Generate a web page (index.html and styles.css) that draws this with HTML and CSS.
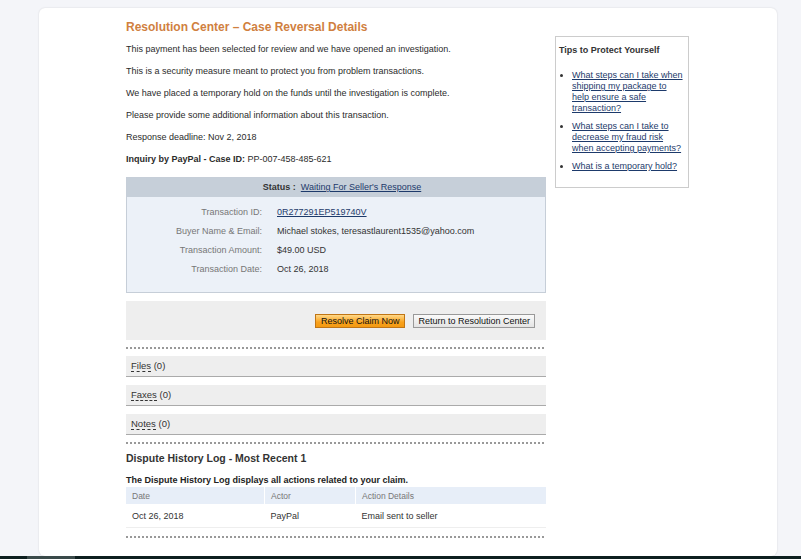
FILE: index.html
```html
<!DOCTYPE html>
<html>
<head>
<meta charset="utf-8">
<link rel="stylesheet" href="styles.css">
</head>
<body>
<div class="page">
  <div class="card">
    <div class="layout">
      <div class="main">
        <h1 class="title">Resolution Center – Case Reversal Details</h1>
        <p class="para">This payment has been selected for review and we have opened an investigation.</p>
        <p class="para">This is a security measure meant to protect you from problem transactions.</p>
        <p class="para">We have placed a temporary hold on the funds until the investigation is complete.</p>
        <p class="para">Please provide some additional information about this transaction.</p>
        <p class="para">Response deadline: Nov 2, 2018</p>
        <p class="para"><b>Inquiry by PayPal - Case ID:</b> PP-007-458-485-621</p>

        <div class="status">
          <div class="status-head"><b>Status :</b>&nbsp; <a href="#" class="link">Waiting For Seller's Response</a></div>
          <div class="status-body">
            <div class="row"><span class="lbl">Transaction ID:</span><span class="val"><a href="#" class="link">0R277291EP519740V</a></span></div>
            <div class="row"><span class="lbl">Buyer Name &amp; Email:</span><span class="val">Michael stokes, teresastlaurent1535@yahoo.com</span></div>
            <div class="row"><span class="lbl">Transaction Amount:</span><span class="val">$49.00 USD</span></div>
            <div class="row"><span class="lbl">Transaction Date:</span><span class="val">Oct 26, 2018</span></div>
          </div>
        </div>

        <div class="actions">
          <button class="btn btn-primary">Resolve Claim Now</button>
          <button class="btn btn-return">Return to Resolution Center</button>
        </div>

        <div class="dots"></div>

        <div class="sect"><span class="sect-name">Files</span> (0)</div>
        <div class="sect"><span class="sect-name">Faxes</span> (0)</div>
        <div class="sect"><span class="sect-name">Notes</span> (0)</div>

        <div class="dots dots-2"></div>

        <h2 class="log-title">Dispute History Log - Most Recent 1</h2>
        <p class="log-desc">The Dispute History Log displays all actions related to your claim.</p>
        <table class="log">
          <thead>
            <tr><th class="c1">Date</th><th class="c2">Actor</th><th class="c3">Action Details</th></tr>
          </thead>
          <tbody>
            <tr><td>Oct 26, 2018</td><td>PayPal</td><td>Email sent to seller</td></tr>
          </tbody>
        </table>
        <div class="dots dots-3"></div>
      </div>

      <aside class="tips">
        <h3 class="tips-title">Tips to Protect Yourself</h3>
        <ul class="tips-list">
          <li><a href="#" class="link">What steps can I take when shipping my package to help ensure a safe transaction?</a></li>
          <li><a href="#" class="link">What steps can I take to decrease my fraud risk when accepting payments?</a></li>
          <li><a href="#" class="link">What is a temporary hold?</a></li>
        </ul>
      </aside>
    </div>
  </div>
</div>
<div class="taskbar"><div class="thumb"></div></div>
</body>
</html>
```

FILE: styles.css
```css
html, body {
  margin: 0;
  padding: 0;
}
body {
  background: #f4f5f9;
  font-family: "Liberation Sans", Arial, sans-serif;
  color: #333;
  height: 559px;
  overflow: hidden;
  position: relative;
}
.page {
  padding: 8px 24px 0 39px;
}
.card {
  width: 738px;
  height: 548px;
  background: #fff;
  border-radius: 6px;
  box-shadow: 0 0 2px rgba(0,0,0,0.14);
  box-sizing: border-box;
  padding: 12px 0 0 87px;
}
.layout {
  display: flex;
  gap: 9px;
  align-items: flex-start;
}
.main {
  width: 420px;
}
.title {
  margin: 0 0 8px;
  font-size: 12px;
  font-weight: bold;
  color: #d0803f;
  line-height: 15px;
}
.para {
  margin: 0 0 9px;
  font-size: 9px;
  line-height: 13px;
  color: #2b2b2b;
}
.link {
  color: #1d3a6b;
  text-decoration: underline;
}
.status {
  margin-top: 11px;
  border: 1px solid #c6ced8;
}
.status-head {
  background: #c6cfd9;
  height: 19px;
  line-height: 19px;
  text-align: center;
  font-size: 9px;
  color: #333;
  padding-left: 12px;
}
.status-body {
  background: #ecf1f8;
  padding: 6px 0 13px;
}
.row {
  display: flex;
  gap: 15px;
  font-size: 9px;
  line-height: 19px;
}
.lbl {
  width: 135px;
  text-align: right;
  color: #777;
}
.val { color: #333; }
.actions {
  margin-top: 8px;
  background: #eee;
  height: 39px;
  display: flex;
  justify-content: flex-end;
  align-items: center;
  gap: 8px;
  padding-right: 11px;
}
.btn {
  font-family: "Liberation Sans", Arial, sans-serif;
  font-size: 9px;
  height: 14px;
  padding: 0 5px;
  border: 1px solid #999;
  background: linear-gradient(#fafafa, #e4e4e4);
  color: #111;
  line-height: 12px;
  margin: 0;
  white-space: nowrap;
}
.btn-return {
  padding: 0 4px;
}
.btn-primary {
  border-color: #c07515;
  background: linear-gradient(#ffd98a, #f9a11b 60%, #f39a12);
}
.dots {
  margin-top: 7px;
  height: 2px;
  background-image: linear-gradient(90deg, #999 2px, transparent 2px);
  background-size: 4px 2px;
}
.sect {
  background: #eee;
  border-bottom: 1px solid #aaa;
  height: 20px;
  line-height: 20px;
  font-size: 9.5px;
  padding-left: 5px;
  margin-top: 8px;
  color: #333;
}
.dots + .sect { margin-top: 7px; }
.sect-name {
  border-bottom: 1px dashed #333;
  line-height: 10px;
  display: inline-block;
}
.dots-2 { margin-top: 7px; }
.log-title {
  margin: 7px 0 0;
  font-size: 10.5px;
  font-weight: bold;
  color: #333;
  line-height: 14px;
}
.log-desc {
  margin: 9px 0 0;
  font-size: 9px;
  font-weight: bold;
  color: #222;
  line-height: 12px;
}
.log {
  width: 100%;
  border-collapse: collapse;
  margin-top: 1px;
}
.log th {
  background: #e7eef8;
  color: #777;
  font-weight: normal;
  font-size: 8.5px;
  text-align: left;
  height: 17px;
  padding: 0 0 0 6px;
  border-left: 1px solid #fff;
}
.log th.c1 { border-left: none; width: 132px; }
.log th.c2 { width: 84px; }
.log td {
  font-size: 9px;
  height: 23px;
  padding: 0 0 0 6px;
  border-bottom: 1px solid #eee;
  color: #333;
}
.dots-3 { margin-top: 8px; }
.tips {
  margin-top: 16px;
  width: 134px;
  height: 152px;
  box-sizing: border-box;
  border: 1px solid #ccc;
  padding: 7px 3px 0 3px;
}
.tips-title {
  margin: 0 0 14px;
  font-size: 9px;
  font-weight: bold;
  color: #333;
  line-height: 12px;
}
.tips-list {
  margin: 0;
  padding: 0 0 0 13px;
  font-size: 9px;
  line-height: 11px;
}
.tips-list li {
  margin-bottom: 7px;
  color: #333;
}
.taskbar {
  position: absolute;
  left: 0;
  right: 0;
  bottom: 0;
  height: 3px;
  background: #0d1f1f;
}
.thumb {
  margin-left: 27px;
  width: 48px;
  height: 3px;
  background: #3a4a4a;
}
```
